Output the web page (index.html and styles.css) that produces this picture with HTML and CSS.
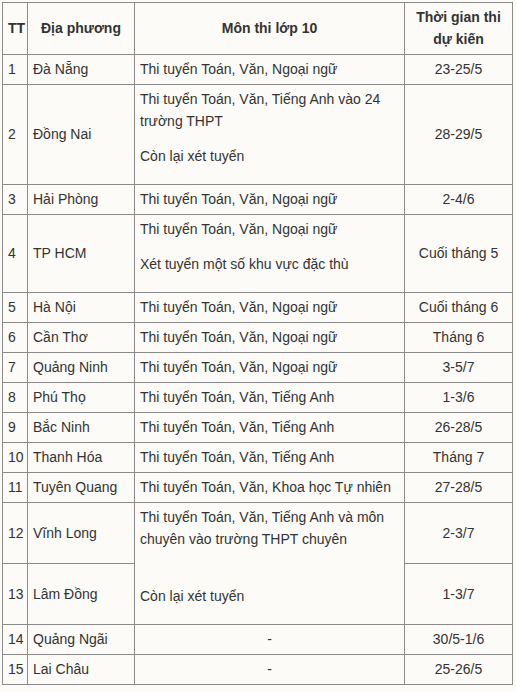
FILE: index.html
```html
<!DOCTYPE html>
<html lang="vi">
<head>
<meta charset="utf-8">
<link rel="stylesheet" href="styles.css">
</head>
<body>
<table class="exam">
  <colgroup>
    <col class="c-tt">
    <col class="c-place">
    <col class="c-subj">
    <col class="c-time">
  </colgroup>
  <thead>
    <tr>
      <th>TT</th>
      <th>Địa phương</th>
      <th>Môn thi lớp 10</th>
      <th>Thời gian thi dự kiến</th>
    </tr>
  </thead>
  <tbody>
    <tr><td>1</td><td>Đà Nẵng</td><td>Thi tuyển Toán, Văn, Ngoại ngữ</td><td class="ctr">23-25/5</td></tr>
    <tr><td>2</td><td>Đồng Nai</td><td><p>Thi tuyển Toán, Văn, Tiếng Anh vào 24 trường THPT</p><p>Còn lại xét tuyển</p></td><td class="ctr">28-29/5</td></tr>
    <tr><td>3</td><td>Hải Phòng</td><td>Thi tuyển Toán, Văn, Ngoại ngữ</td><td class="ctr">2-4/6</td></tr>
    <tr><td>4</td><td>TP HCM</td><td><p>Thi tuyển Toán, Văn, Ngoại ngữ</p><p>Xét tuyển một số khu vực đặc thù</p></td><td class="ctr">Cuối tháng 5</td></tr>
    <tr><td>5</td><td>Hà Nội</td><td>Thi tuyển Toán, Văn, Ngoại ngữ</td><td class="ctr">Cuối tháng 6</td></tr>
    <tr><td>6</td><td>Cần Thơ</td><td>Thi tuyển Toán, Văn, Ngoại ngữ</td><td class="ctr">Tháng 6</td></tr>
    <tr><td>7</td><td>Quảng Ninh</td><td>Thi tuyển Toán, Văn, Ngoại ngữ</td><td class="ctr">3-5/7</td></tr>
    <tr><td>8</td><td>Phú Thọ</td><td>Thi tuyển Toán, Văn, Tiếng Anh</td><td class="ctr">1-3/6</td></tr>
    <tr><td>9</td><td>Bắc Ninh</td><td>Thi tuyển Toán, Văn, Tiếng Anh</td><td class="ctr">26-28/5</td></tr>
    <tr><td>10</td><td>Thanh Hóa</td><td>Thi tuyển Toán, Văn, Tiếng Anh</td><td class="ctr">Tháng 7</td></tr>
    <tr><td>11</td><td>Tuyên Quang</td><td>Thi tuyển Toán, Văn, Khoa học Tự nhiên</td><td class="ctr">27-28/5</td></tr>
    <tr><td>12</td><td>Vĩnh Long</td><td rowspan="2"><p>Thi tuyển Toán, Văn, Tiếng Anh và môn chuyên vào trường THPT chuyên<br>&nbsp;</p><p>Còn lại xét tuyển</p></td><td class="ctr">2-3/7</td></tr>
    <tr><td>13</td><td>Lâm Đồng</td><td class="ctr">1-3/7</td></tr>
    <tr><td>14</td><td>Quảng Ngãi</td><td class="ctr">-</td><td class="ctr">30/5-1/6</td></tr>
    <tr><td>15</td><td>Lai Châu</td><td class="ctr">-</td><td class="ctr">25-26/5</td></tr>
  </tbody>
</table>
</body>
</html>
```

FILE: styles.css
```css
html, body {
  margin: 0;
  background: #fcfbf7;
}
body {
  padding: 2px;
  font-family: "Liberation Sans", Arial, sans-serif;
  font-size: 14px;
  color: #333;
}
.exam {
  border-collapse: collapse;
  table-layout: fixed;
  width: 510px;
  background: #fcfbf7;
}
.c-tt { width: 25px; }
.c-place { width: 107px; }
.c-subj { width: 270px; }
.c-time { width: 108px; }
.exam th,
.exam td {
  border: 1px solid #8a8a8a;
  padding: 3px 5px 4px;
  line-height: 22px;
  vertical-align: middle;
  text-align: left;
}
.exam th {
  font-weight: bold;
  text-align: center;
}
.exam td.ctr {
  text-align: center;
}
.exam p {
  margin: 0 0 13px;
}
```
